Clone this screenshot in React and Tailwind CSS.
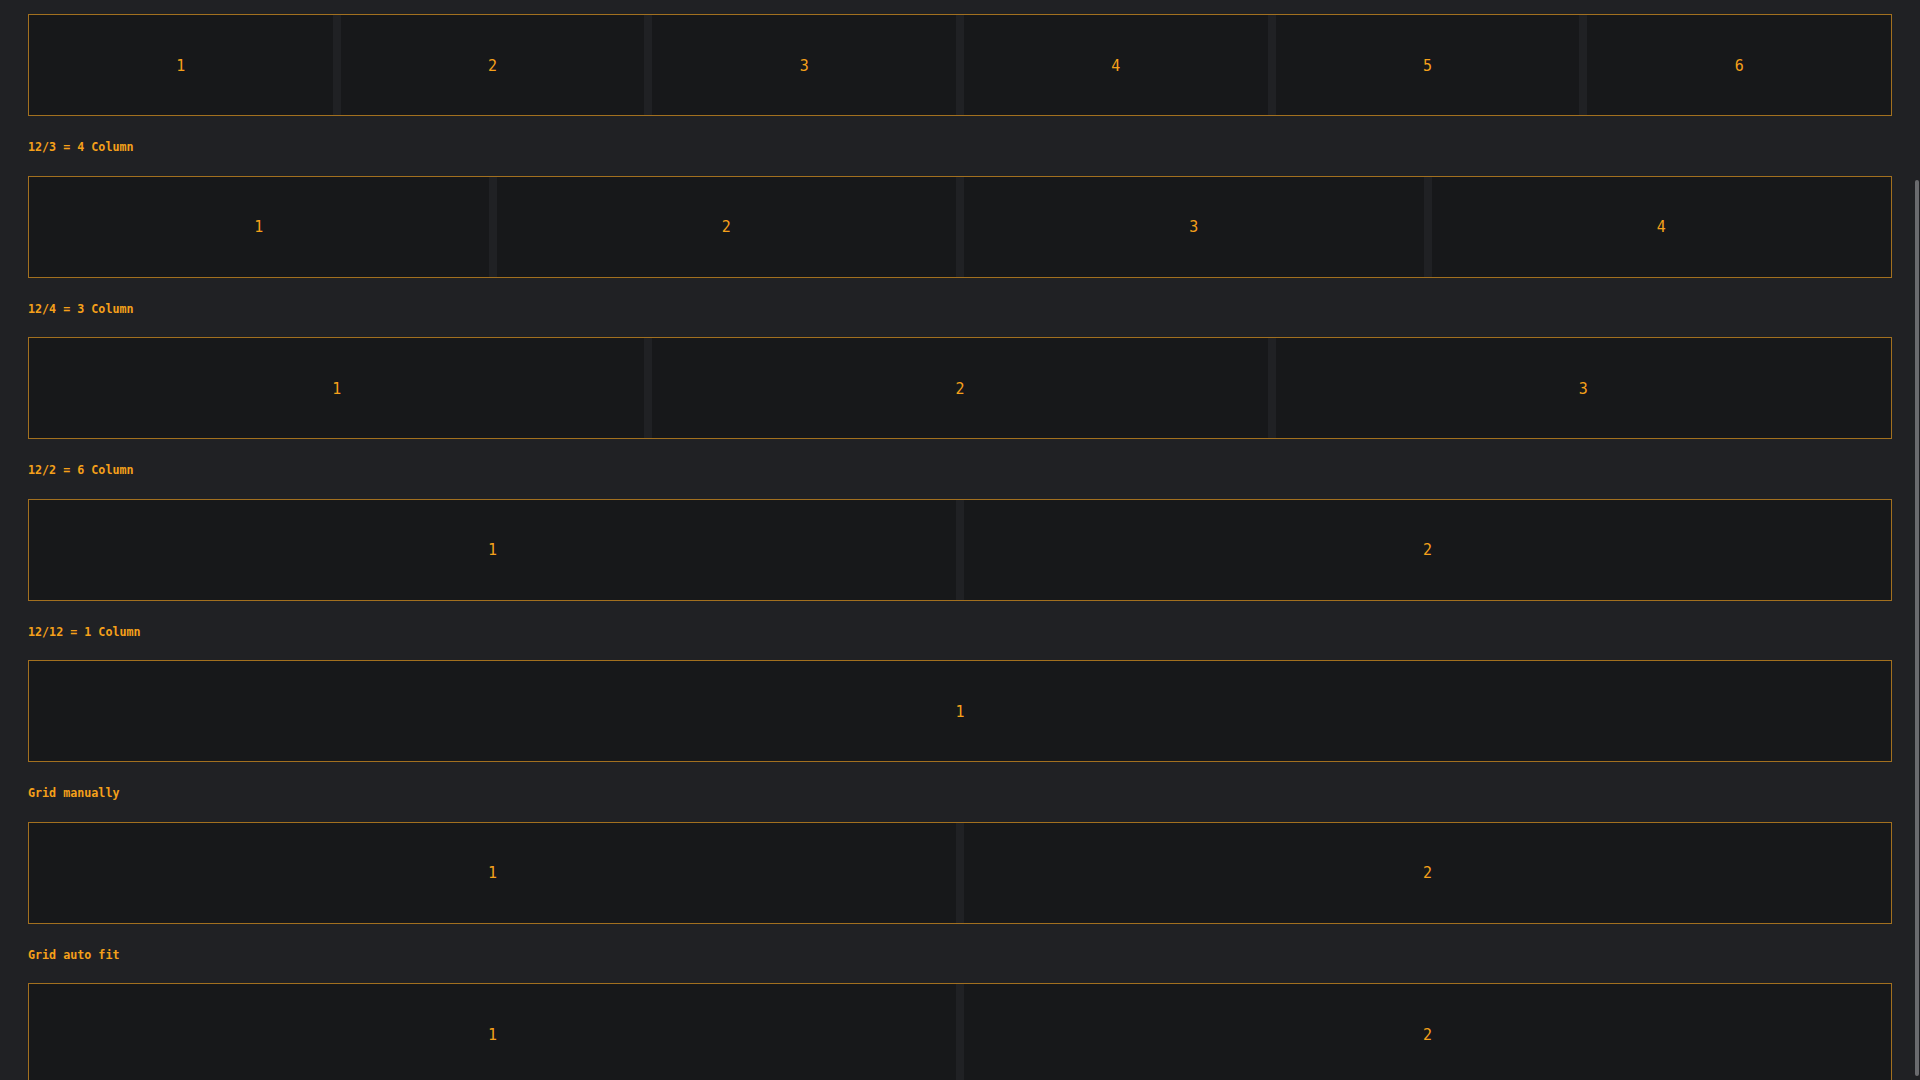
const sections = [
  { label: null, cols: "grid-cols-6", count: 6 },
  { label: "12/3 = 4 Column", cols: "grid-cols-4", count: 4 },
  { label: "12/4 = 3 Column", cols: "grid-cols-3", count: 3 },
  { label: "12/2 = 6 Column", cols: "grid-cols-2", count: 2 },
  { label: "12/12 = 1 Column", cols: "grid-cols-1", count: 1 },
  { label: "Grid manually", cols: "grid-cols-[1fr_1fr]", count: 2 },
  { label: "Grid auto fit", cols: "grid-cols-[repeat(auto-fit,minmax(600px,1fr))]", count: 2 },
];

function GridBox({ cols, count }) {
  return (
    <div className={`grid ${cols} gap-2 border border-[#a2701f]`}>
      {Array.from({ length: count }, (_, i) => (
        <div
          key={i}
          className="h-[100px] pt-[2px] bg-[#17181a] flex items-center justify-center text-[15px] text-[#f5a01a]"
        >
          {i + 1}
        </div>
      ))}
    </div>
  );
}

export default function App() {
  return (
    <div
      className="relative h-screen overflow-hidden bg-[#202124]"
      style={{ fontFamily: '"DejaVu Sans Mono", "Liberation Mono", monospace' }}
    >
      <div className="px-7 pt-[14px]">
        {sections.map((s, idx) => (
          <div key={idx}>
            {s.label && (
              <p className="mt-6 mb-[21.5px] text-[11.7px] leading-[14px] font-bold text-[#f5a01a]">
                {s.label}
              </p>
            )}
            <GridBox cols={s.cols} count={s.count} />
          </div>
        ))}
      </div>

      {/* overlay scrollbar */}
      <div className="absolute right-[1px] top-[180px] bottom-[4px] w-[4px] rounded-full bg-[#6a6b6e]" />
    </div>
  );
}
